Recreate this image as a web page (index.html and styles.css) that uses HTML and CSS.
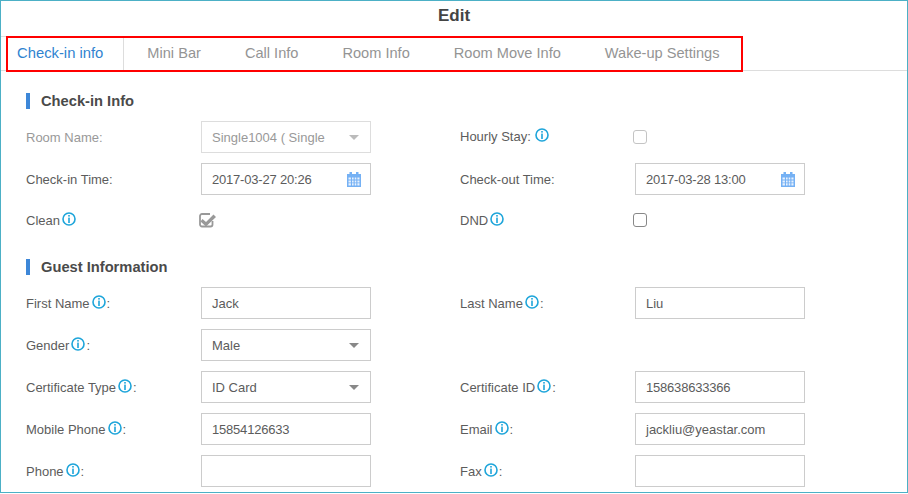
FILE: index.html
```html
<!DOCTYPE html>
<html lang="en">
<head>
  <meta charset="UTF-8">
  <meta name="viewport" content="width=device-width, initial-scale=1.0">
  <title>Edit</title>
  <link rel="stylesheet" href="styles.css">
</head>
<body>
  <svg class="defs" width="0" height="0">
    <symbol id="info" viewBox="0 0 14 14">
      <circle cx="7" cy="7" r="6" fill="none" stroke="#1ea5da" stroke-width="1.6"/>
      <rect x="6.2" y="3" width="1.6" height="1.6" fill="#1ea5da"/>
      <rect x="6.2" y="5.6" width="1.6" height="5.4" fill="#1ea5da"/>
    </symbol>
    <symbol id="calendar" viewBox="0 0 16 16">
      <path d="M1 3h2.500V1h2.500v2h4V1h2.500v2H15v13H1z" fill="#75b1f4"/>
      <path d="M2.500 6.500h2.400v2H2.500zM6 6.500h1.600v2H6zM8.700 6.500h1.600v2H8.700zM11.400 6.500h2.100v2h-2.100zM2.500 9.500h2.400v2H2.500zM6 9.500h1.600v2H6zM8.700 9.500h1.600v2H8.700zM11.400 9.500h2.100v2h-2.100zM2.500 12.300h2.400v2.200H2.500zM6 12.300h1.600v2.200H6zM8.700 12.300h1.600v2.200H8.700zM11.400 12.300h2.100v2.200h-2.100z" fill="#e8f2fe"/>
    </symbol>
  </svg>

  <div class="dialog">
    <h1 class="dialog-title">Edit</h1>

    <div class="tabs">
      <a class="tab active">Check-in info</a>
      <a class="tab">Mini Bar</a>
      <a class="tab">Call Info</a>
      <a class="tab">Room Info</a>
      <a class="tab">Room Move Info</a>
      <a class="tab">Wake-up Settings</a>
      <div class="tabs-highlight"></div>
    </div>

    <div class="content">
      <h2 class="section-title">Check-in Info</h2>
      <div class="form-grid">
        <div class="field disabled">
          <label>Room Name:</label>
          <div class="select"><span>Single1004 ( Single</span><i class="caret"></i></div>
        </div>
        <div class="field">
          <label class="raised">Hourly Stay:<svg class="info wide"><use href="#info"/></svg></label>
          <span class="checkbox light"></span>
        </div>
        <div class="field">
          <label>Check-in Time:</label>
          <div class="select"><span class="num">2017-03-27 20:26</span><svg class="cal"><use href="#calendar"/></svg></div>
        </div>
        <div class="field">
          <label>Check-out Time:</label>
          <div class="select"><span class="num">2017-03-28 13:00</span><svg class="cal"><use href="#calendar"/></svg></div>
        </div>
        <div class="field short">
          <label>Clean<svg class="info"><use href="#info"/></svg></label>
          <svg class="checkmark" width="18" height="16" viewBox="0 0 18 16">
            <path d="M13.500 9v3.500a2 2 0 0 1-2 2h-8.500a2 2 0 0 1-2-2v-8.500a2 2 0 0 1 2-2h8" fill="none" stroke="#999" stroke-width="1.800"/>
            <path d="M3.500 7L7 10L14.500 2.500L17 5L7 14.500L1.500 9.500z" fill="#999"/>
          </svg>
        </div>
        <div class="field short">
          <label>DND<svg class="info"><use href="#info"/></svg></label>
          <span class="checkbox"></span>
        </div>
      </div>

      <h2 class="section-title second">Guest Information</h2>
      <div class="form-grid">
        <div class="field">
          <label>First Name<svg class="info"><use href="#info"/></svg>:</label>
          <div class="select"><span>Jack</span></div>
        </div>
        <div class="field">
          <label>Last Name<svg class="info"><use href="#info"/></svg>:</label>
          <div class="select"><span>Liu</span></div>
        </div>
        <div class="field">
          <label>Gender<svg class="info"><use href="#info"/></svg>:</label>
          <div class="select"><span>Male</span><i class="caret"></i></div>
        </div>
        <div class="field"></div>
        <div class="field">
          <label>Certificate Type<svg class="info"><use href="#info"/></svg>:</label>
          <div class="select"><span>ID Card</span><i class="caret"></i></div>
        </div>
        <div class="field">
          <label>Certificate ID<svg class="info"><use href="#info"/></svg>:</label>
          <div class="select"><span class="num">158638633366</span></div>
        </div>
        <div class="field">
          <label>Mobile Phone<svg class="info"><use href="#info"/></svg>:</label>
          <div class="select"><span class="num">15854126633</span></div>
        </div>
        <div class="field">
          <label>Email<svg class="info"><use href="#info"/></svg>:</label>
          <div class="select"><span>jackliu@yeastar.com</span></div>
        </div>
        <div class="field">
          <label>Phone<svg class="info"><use href="#info"/></svg>:</label>
          <div class="select"></div>
        </div>
        <div class="field">
          <label>Fax<svg class="info"><use href="#info"/></svg>:</label>
          <div class="select"></div>
        </div>
      </div>
    </div>
  </div>
</body>
</html>
```

FILE: styles.css
```css
html, body {
  margin: 0;
  height: 494px;
  overflow: hidden;
  background: #fff;
}
body {
  font-family: "Liberation Sans", Arial, sans-serif;
  font-size: 13px;
  color: #5c5c5c;
}
.defs {
  position: absolute;
}
.dialog {
  box-sizing: border-box;
  width: 908px;
  height: 493px;
  border: 1px solid #4cb0c6;
  overflow: hidden;
}
.dialog-title {
  margin: 0;
  height: 35px;
  line-height: 29px;
  font-size: 17px;
  font-weight: bold;
  text-align: center;
  color: #444;
}
.tabs {
  position: relative;
  display: flex;
  height: 34px;
  border-bottom: 1px solid #ddd;
}
.tab {
  padding: 0 22px;
  line-height: 35px;
  font-size: 14.6px;
  color: #949494;
}
.tab.active {
  margin-right: 1px;
  padding: 0 20px 0 16px;
  font-size: 14.8px;
  color: #2f83d0;
  border-top: 1px solid #ddd;
  border-right: 1px solid #ddd;
  line-height: 33px;
}
.tabs-highlight {
  position: absolute;
  left: 5px;
  top: 0;
  width: 733px;
  height: 32px;
  border: 2px solid #f00;
}
.content {
  padding: 22px 0 0 25px;
}
.section-title {
  margin: 0 0 12px;
  height: 16px;
  padding-left: 11px;
  border-left: 4px solid #3d87d8;
  line-height: 16px;
  font-size: 14.7px;
  font-weight: bold;
  color: #4a4a4a;
}
.section-title.second {
  margin-top: 24px;
}
.form-grid {
  display: grid;
  grid-template-columns: 434px 434px;
  row-gap: 10px;
}
.field {
  display: flex;
  align-items: center;
  height: 32px;
}
.field.short {
  height: 30px;
}
.field label {
  width: 175px;
  flex: none;
}
.field label.raised {
  padding-bottom: 2px;
}
.field.disabled {
  color: #999;
}
.info {
  width: 14px;
  height: 14px;
  margin: 0 1px 0 2px;
  vertical-align: -1px;
}
.info.wide {
  margin-left: 4px;
}
.select {
  box-sizing: border-box;
  display: flex;
  align-items: center;
  justify-content: space-between;
  width: 170px;
  height: 32px;
  padding: 0 10px;
  border: 1px solid #ccc;
}
.num {
  letter-spacing: -0.2px;
}
.field.disabled .select {
  border-color: #ddd;
}
.caret {
  width: 0;
  height: 0;
  margin-right: 1px;
  border-left: 5px solid transparent;
  border-right: 5px solid transparent;
  border-top: 5px solid #888;
}
.field.disabled .caret {
  border-top-color: #bbb;
}
.cal {
  width: 16px;
  height: 16px;
  margin-right: -2px;
}
.checkbox {
  box-sizing: border-box;
  width: 14px;
  height: 14px;
  margin-left: -2px;
  border: 1.5px solid #888;
  border-radius: 3px;
}
.checkbox.light {
  border-color: #c4c4c4;
}
.checkmark {
  margin-left: -2px;
}
```
